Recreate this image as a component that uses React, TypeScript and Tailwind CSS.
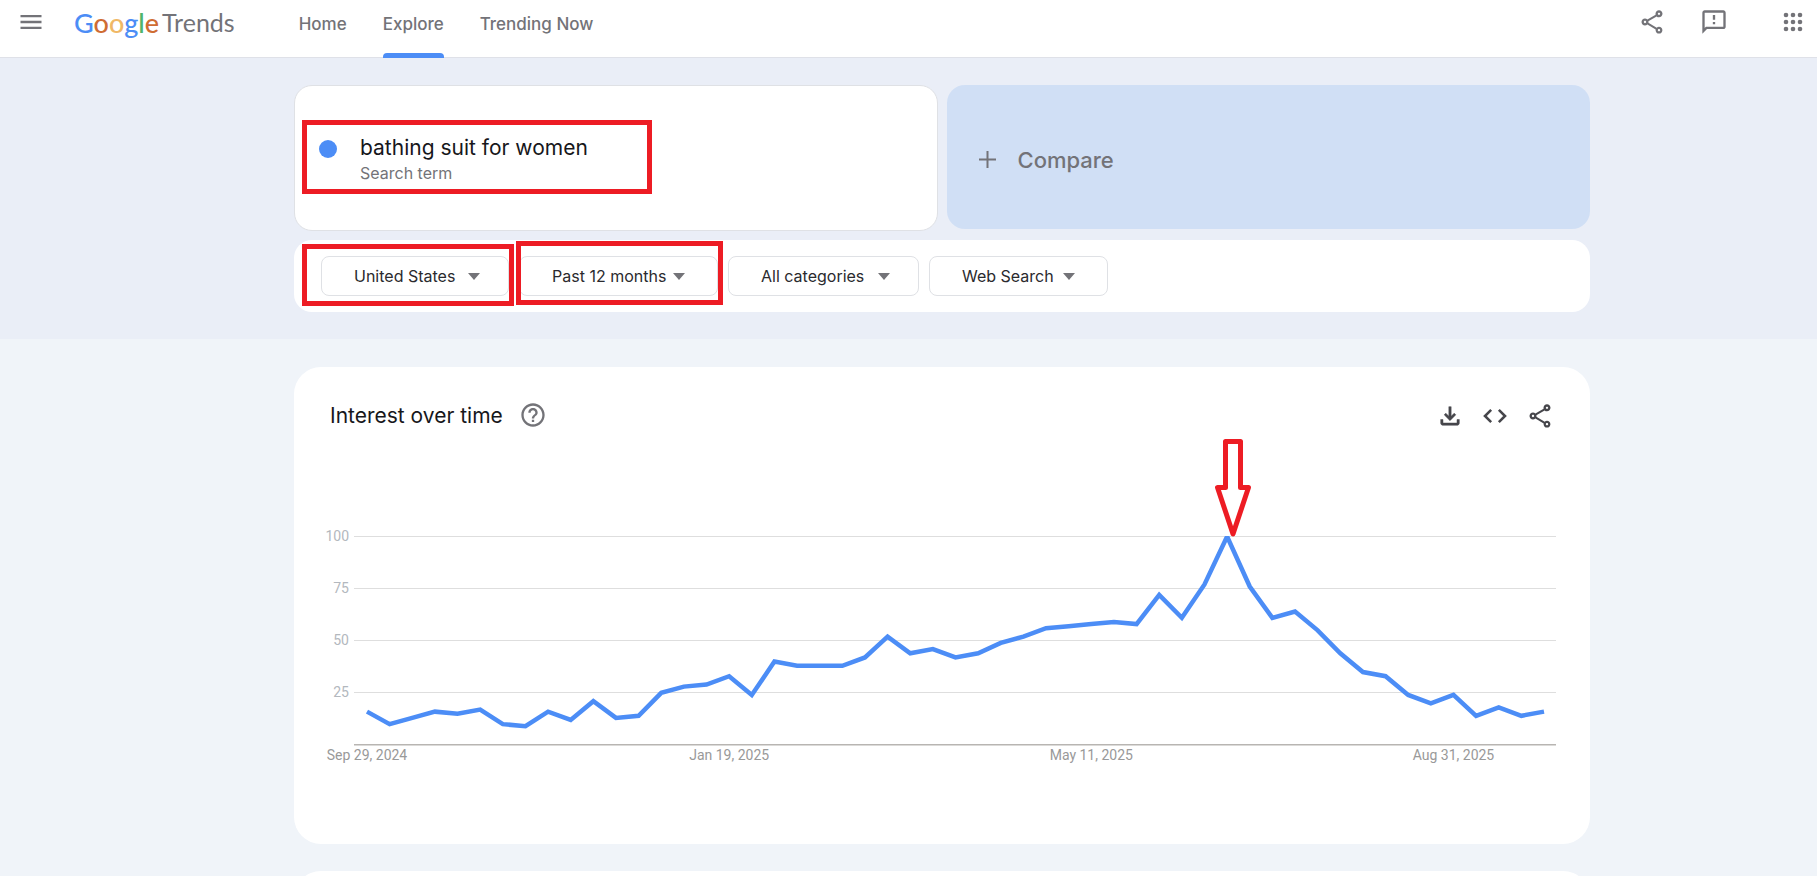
import React, { useState } from "react";
import { MdHelpOutline, MdMenu, MdOutlineFeedback, MdOutlineShare } from "react-icons/md";

const navItems = [
  { name: "Home", href: "#home" },
  { name: "Explore", href: "#explore" },
  { name: "Trending Now", href: "#trending" },
];

const interest = [
  16, 10, 13, 16, 15, 17, 10, 9, 16, 12, 21, 13, 14, 25, 28, 29, 33, 24, 40, 38,
  38, 38, 42, 52, 44, 46, 42, 44, 49, 52, 56, 57, 58, 59, 58, 72, 61, 77, 100,
  76, 61, 64, 55, 44, 35, 33, 24, 20, 24, 14, 18, 14, 16,
];

const dateLabels = [
  { index: 0, label: "Sep 29, 2024" },
  { index: 16, label: "Jan 19, 2025" },
  { index: 32, label: "May 11, 2025" },
  { index: 48, label: "Aug 31, 2025" },
];

const CHART = { left: 30, right: 1232, firstX: 43, lastX: 1220, top: 104.5, bottom: 313 };

const toX = (i: number) =>
  CHART.firstX + (i * (CHART.lastX - CHART.firstX)) / (interest.length - 1);
const toY = (v: number) => CHART.bottom - (v * (CHART.bottom - CHART.top)) / 100;

function AppsIcon() {
  return (
    <svg width="20" height="20" viewBox="0 0 20 20" fill="currentColor" aria-hidden="true">
      {[3, 10, 17].map((y) =>
        [3, 10, 17].map((x) => <circle key={`${x}-${y}`} cx={x} cy={y} r="2.3" />)
      )}
    </svg>
  );
}

function DownloadIcon() {
  return (
    <svg
      width="28"
      height="28"
      viewBox="0 0 24 24"
      fill="currentColor"
      stroke="currentColor"
      strokeWidth="0.4"
      aria-hidden="true"
    >
      <path d="M12 16l-5-5 1.4-1.45 2.6 2.6V4h2v8.15l2.6-2.6L17 11l-5 5zM6 20c-.55 0-1.02-.2-1.41-.59C4.2 19.02 4 18.55 4 18v-3h2v3h12v-3h2v3c0 .55-.2 1.02-.59 1.41-.39.39-.86.59-1.41.59H6z" />
    </svg>
  );
}

function EmbedIcon() {
  return (
    <svg
      width="28"
      height="28"
      viewBox="0 0 24 24"
      fill="none"
      stroke="currentColor"
      strokeWidth="2.2"
      aria-hidden="true"
    >
      <path d="M8.700 6.700L3.400 12l5.300 5.300M15.300 6.700L20.600 12l-5.300 5.300" />
    </svg>
  );
}

interface FilterSelectProps {
  label: string;
  options: string[];
  width: string;
  caret: string;
}

function FilterSelect({ label, options, width, caret }: FilterSelectProps) {
  const [value, setValue] = useState(options[0]);

  return (
    <div className={`relative ${width}`}>
      <select
        aria-label={label}
        value={value}
        onChange={(e) => setValue(e.target.value)}
        className="block h-10 w-full appearance-none rounded-lg border border-[#dfe1e5] bg-white pl-8 text-base text-[#2a2a2e]"
      >
        {options.map((option) => (
          <option key={option}>{option}</option>
        ))}
      </select>
      <svg
        className={`pointer-events-none absolute top-[17px] ${caret}`}
        width="12"
        height="7"
        viewBox="0 0 12 7"
        fill="#737378"
      >
        <path d="M0 0h12L6 7z" />
      </svg>
    </div>
  );
}

// Red outline drawn over a control to point it out
function Highlight({ className }: { className: string }) {
  return (
    <div className={`pointer-events-none absolute border-5 border-[#ed1c24] ${className}`} />
  );
}

function InterestChart() {
  const points = interest.map((v, i) => `${toX(i)},${toY(v)}`).join(" ");

  return (
    <svg
      viewBox="0 0 1232 336"
      className="block h-auto w-full font-[Roboto,sans-serif] text-[14px]"
      role="img"
      aria-label="Interest over time"
    >
      <clipPath id="plot">
        <rect x={CHART.left} y="104" width={CHART.right - CHART.left} height="210" />
      </clipPath>
      {[100, 75, 50, 25].map((v) => (
        <g key={v}>
          <rect
            x={CHART.left}
            y={Math.floor(toY(v))}
            width={CHART.right - CHART.left}
            height="1"
            fill="#dedede"
          />
          <text x="25" y={Math.floor(toY(v)) + 5} textAnchor="end" fill="#b3b8be">
            {v}
          </text>
        </g>
      ))}
      <rect x={CHART.left} y="312" width={CHART.right - CHART.left} height="1.5" fill="#b8b5b2" />
      <polyline
        points={points}
        fill="none"
        stroke="#4c8df6"
        strokeWidth="4.5"
        clipPath="url(#plot)"
      />
      {dateLabels.map(({ index, label }) => (
        <text key={label} x={toX(index)} y="328" textAnchor="middle" fill="#999999">
          {label}
        </text>
      ))}
      <path
        d="M901.500 9.500H916.500V55.500H924.500L909 102L893.500 55.500H901.500Z"
        fill="none"
        stroke="#ed1c24"
        strokeWidth="5"
        strokeLinejoin="round"
      />
    </svg>
  );
}

export default function App() {
  return (
    <div className="min-h-screen bg-[#f0f4f9] font-[Inter,sans-serif] text-[#1f1f1f]">
      {/* Header */}
      <header className="flex h-[58px] items-start border-b border-[#dfe1e8] bg-white text-[#737378]">
        <button aria-label="Main menu" className="mt-2 ml-[17px]">
          <MdMenu size={28} />
        </button>
        <a href="#home" className="ml-[29px] flex h-[46px] items-center gap-[3px] font-[Lato,sans-serif]">
          <span className="text-[27px] font-medium">
            <span className="text-[#4c8df6]">G</span>
            <span className="text-[#cf6c33]">o</span>
            <span className="text-[#f0b866]">o</span>
            <span className="text-[#4c8df6]">g</span>
            <span className="text-[#4fb56b]">l</span>
            <span className="text-[#cf6c33]">e</span>
          </span>
          <span className="text-[25px]">Trends</span>
        </a>
        <nav className="ml-16 flex h-[58px] gap-9 text-[17px] font-medium">
          {navItems.map((item) => (
            <a key={item.name} href={item.href} className="flex flex-col justify-between">
              <span className="pt-3">{item.name}</span>
              {item.name === "Explore" && <span className="h-[5px] rounded-t bg-[#4c8df6]" />}
            </a>
          ))}
        </nav>
        <div className="mr-[14px] ml-auto flex items-center">
          <button aria-label="Share" className="mt-2">
            <MdOutlineShare size={28} />
          </button>
          <button aria-label="Send feedback" className="mt-2 ml-[34px]">
            <MdOutlineFeedback size={28} />
          </button>
          <button aria-label="Google apps" className="mt-2 ml-[55px]">
            <AppsIcon />
          </button>
        </div>
      </header>

      {/* Search terms and filters */}
      <section className="bg-[#eaeef7] pt-[27px] pr-[227px] pb-[27px] pl-[294px]">
        <div className="grid grid-cols-2 items-start gap-[9px]">
          <div className="relative flex h-[146px] items-start rounded-[18px] border border-[#dfe1e5] bg-white pl-6">
            <span className="mt-[54px] size-[18px] rounded-full bg-[#4c8df6]" />
            <div className="mt-12 ml-[23px]">
              <div className="text-[21px] leading-7 text-[#17171b]">bathing suit for women</div>
              <div className="text-base leading-[22px] text-[#737378]">Search term</div>
            </div>
            <Highlight className="top-[34px] left-[7px] h-[74px] w-[350px]" />
          </div>
          <button className="flex h-[144px] items-center rounded-[18px] bg-[#d0dff5] pt-[6px] pl-8 text-[22px] font-medium text-[#737378]">
            <svg
              className="mb-[1px]"
              width="17"
              height="17"
              viewBox="0 0 17 17"
              stroke="currentColor"
              strokeWidth="2"
            >
              <path d="M8.500 0v17M0 8.500h17" />
            </svg>
            <span className="ml-[22px]">Compare</span>
          </button>
        </div>

        <div className="relative mt-[9px] flex gap-[10px] rounded-[18px] bg-white py-4 pl-[27px]">
          <FilterSelect
            label="Location"
            options={["United States", "Worldwide"]}
            width="w-[188px]"
            caret="right-[29px]"
          />
          <FilterSelect
            label="Time range"
            options={["Past 12 months", "Past 5 years"]}
            width="w-[199px]"
            caret="right-[33px]"
          />
          <FilterSelect
            label="Category"
            options={["All categories", "Shopping"]}
            width="w-[191px]"
            caret="right-[29px]"
          />
          <FilterSelect
            label="Search type"
            options={["Web Search", "Image Search"]}
            width="w-[179px]"
            caret="right-[33px]"
          />
          <Highlight className="top-1 left-2 h-[62px] w-[212px]" />
          <Highlight className="top-[1px] left-[222px] h-16 w-[207px]" />
        </div>
      </section>

      {/* Chart card */}
      <main className="flex flex-col gap-[27px] pt-7 pr-[227px] pl-[294px]">
        <section className="rounded-[27px] bg-white pb-[76px]">
          <div className="flex h-[65px] items-end pr-9 pl-9">
            <h1 className="mb-[2px] text-[21px] leading-7 text-[#17171b]">Interest over time</h1>
            <button aria-label="Help" className="mb-[3px] ml-4 text-[#737378]">
              <MdHelpOutline size={28} />
            </button>
            <div className="mb-[2px] ml-auto flex items-center gap-[17px] text-[#46464b]">
              <button aria-label="Download CSV">
                <DownloadIcon />
              </button>
              <button aria-label="Embed">
                <EmbedIcon />
              </button>
              <button aria-label="Share chart">
                <MdOutlineShare size={28} />
              </button>
            </div>
          </div>
          <div className="pr-[34px] pl-[30px]">
            <InterestChart />
          </div>
        </section>
        <section className="h-[5px] overflow-hidden">
          <div className="h-16 rounded-[27px] bg-white" />
        </section>
      </main>
    </div>
  );
}
